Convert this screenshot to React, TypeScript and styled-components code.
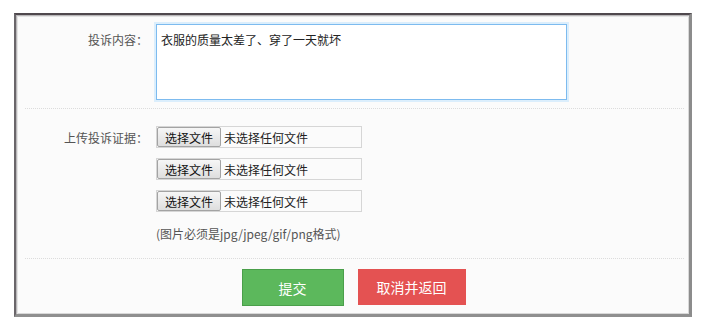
import styled, { createGlobalStyle } from 'styled-components';

const GlobalStyle = createGlobalStyle`
  html, body {
    margin: 0;
    padding: 0;
    background: #ffffff;
    font-family: "Noto Sans CJK SC", "Liberation Sans", sans-serif;
    font-size: 12px;
    color: #333;
  }
`;

const FileField = ({ id }: { id: string }) => (
  <FileBox htmlFor={id}>
    <input id={id} type="file" hidden />
    <span className="file_btn">选择文件</span>
    <span className="file_name">未选择任何文件</span>
  </FileBox>
);

const App = () => {
  return (
    <>
      <GlobalStyle />
      <Panel>
        <Section>
          <Label>投诉内容：</Label>
          <TextArea defaultValue="衣服的质量太差了、穿了一天就坏" />
        </Section>
        <Section $pad="17px 0 15px">
          <Label $top={3}>上传投诉证据：</Label>
          <Controls>
            <FileField id="file1" />
            <FileField id="file2" />
            <FileField id="file3" />
            <Hint>(图片必须是jpg/jpeg/gif/png格式)</Hint>
          </Controls>
        </Section>
        <Actions>
          <Button $variant="submit">提交</Button>
          <Button $variant="cancel">取消并返回</Button>
        </Actions>
      </Panel>
    </>
  );
};

const Panel = styled.div`
  margin: 13px 0 0 14px;
  width: 673px;
  background: #fbfbfb;
  border-top: 2px solid #4f484d;
  border-left: 2px solid #6a666a;
  border-right: 3px solid #8c8c8c;
  border-bottom: 3px solid #8f8f8f;
  box-shadow: inset 1px 1px 0 #b9b7b9, inset 2px 2px 0 #e4e4e4, inset -1px -1px 0 #d8d8d8;
`;

const Section = styled.div<{ $pad?: string }>`
  display: flex;
  align-items: flex-start;
  gap: 8px;
  margin: 0 5px 0 9px;
  padding: ${(p) => p.$pad || '9px 0 8px'};
  border-bottom: 1px dotted #dcdcdc;
`;

const Label = styled.div<{ $top?: number }>`
  width: 123px;
  flex-shrink: 0;
  text-align: right;
  color: #555;
  font-size: 12px;
  line-height: 18px;
  padding-top: ${(p) => p.$top ?? 7}px;
`;

const TextArea = styled.textarea`
  box-sizing: border-box;
  width: 411px;
  height: 76px;
  margin: 0;
  padding: 6px 4px;
  border: 1px solid #7dbbef;
  box-shadow: 0 0 0 2px #dbeefc;
  outline: none;
  resize: none;
  background: #fff;
  font-family: inherit;
  font-size: 12px;
  line-height: 18px;
  color: #222;
`;

const Controls = styled.div`
  display: flex;
  flex-direction: column;
  gap: 10px;
`;

const FileBox = styled.label`
  box-sizing: border-box;
  display: flex;
  align-items: center;
  width: 206px;
  height: 22px;
  border: 1px solid #d6d6d6;
  background: #fbfbfb;
  cursor: pointer;

  .file_btn {
    box-sizing: border-box;
    height: 20px;
    width: 64px;
    display: flex;
    align-items: center;
    justify-content: center;
    background: linear-gradient(#f6f6f6, #dedede);
    border: 1px solid #a3a3a3;
    border-radius: 2px;
    color: #111;
    font-size: 12px;
  }
  .file_name {
    margin-left: 3px;
    color: #222;
    font-size: 12px;
  }
`;

const Hint = styled.div`
  margin-top: 3px;
  color: #555;
  font-size: 12px;
  line-height: 18px;
`;

const Actions = styled.div`
  display: flex;
  justify-content: center;
  gap: 14px;
  padding: 10px 0 8px 2px;
`;

const Button = styled.button<{ $variant: 'submit' | 'cancel' }>`
  box-sizing: border-box;
  height: ${(p) => (p.$variant === 'submit' ? '37px' : '36px')};
  width: ${(p) => (p.$variant === 'submit' ? '102px' : '108px')};
  border: 1px solid ${(p) => (p.$variant === 'submit' ? '#4a9f4a' : '#e45252')};
  background: ${(p) => (p.$variant === 'submit' ? '#5cb85c' : '#e45252')};
  color: #fff;
  font-family: inherit;
  font-size: 14px;
  cursor: pointer;
`;

export default App;
